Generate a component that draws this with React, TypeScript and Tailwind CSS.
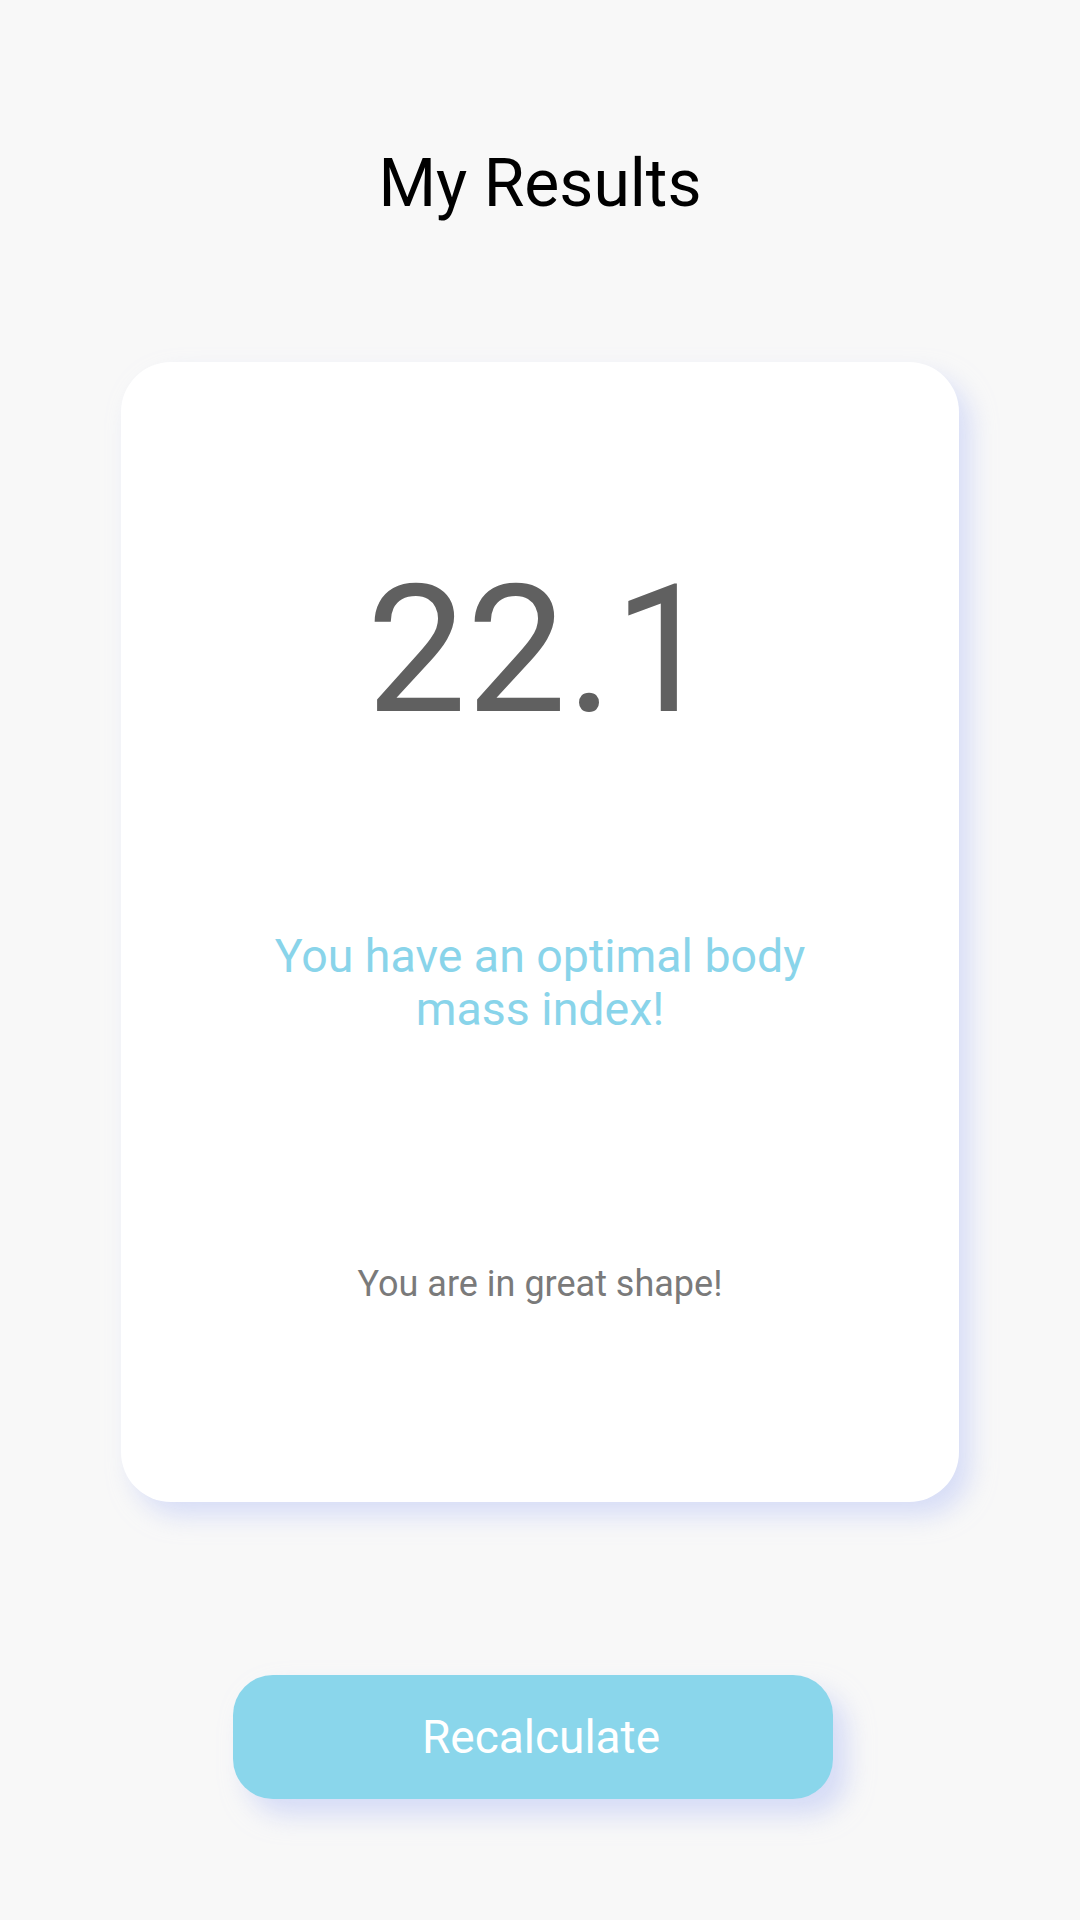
import React from 'react';

const App = () => {
  return (
    <div className="min-h-screen w-full bg-[#f8f8f8] flex flex-col items-center font-['Roboto',sans-serif]">
      {/* Title */}
      <h1 className="mt-[147px] text-[66px] leading-[74px] text-black font-normal">My Results</h1>

      {/* Result card */}
      <div className="mt-[141px] w-[838px] h-[1140px] bg-white rounded-[50px] shadow-[12px_14px_24px_rgba(190,200,245,0.55)] flex flex-col items-center">
        <div className="mt-[188px] text-[178px] leading-[200px] text-[#606060]">22.1</div>
        <p className="mt-[180px] w-[580px] text-center text-[46.5px] leading-[53px] text-[#89d4ea]">
          You have an optimal body mass index!
        </p>
        <p className="mt-[228px] text-[36px] leading-[40px] text-[#7a7a7a]">You are in great shape!</p>
      </div>

      {/* Action */}
      <button className="mt-[173px] mr-[14px] pl-[16px] w-[600px] h-[124px] rounded-[40px] bg-[#8ad6eb] text-white text-[46px] shadow-[14px_16px_26px_rgba(190,200,245,0.6)]">
        Recalculate
      </button>
    </div>
  );
};

export default App;
